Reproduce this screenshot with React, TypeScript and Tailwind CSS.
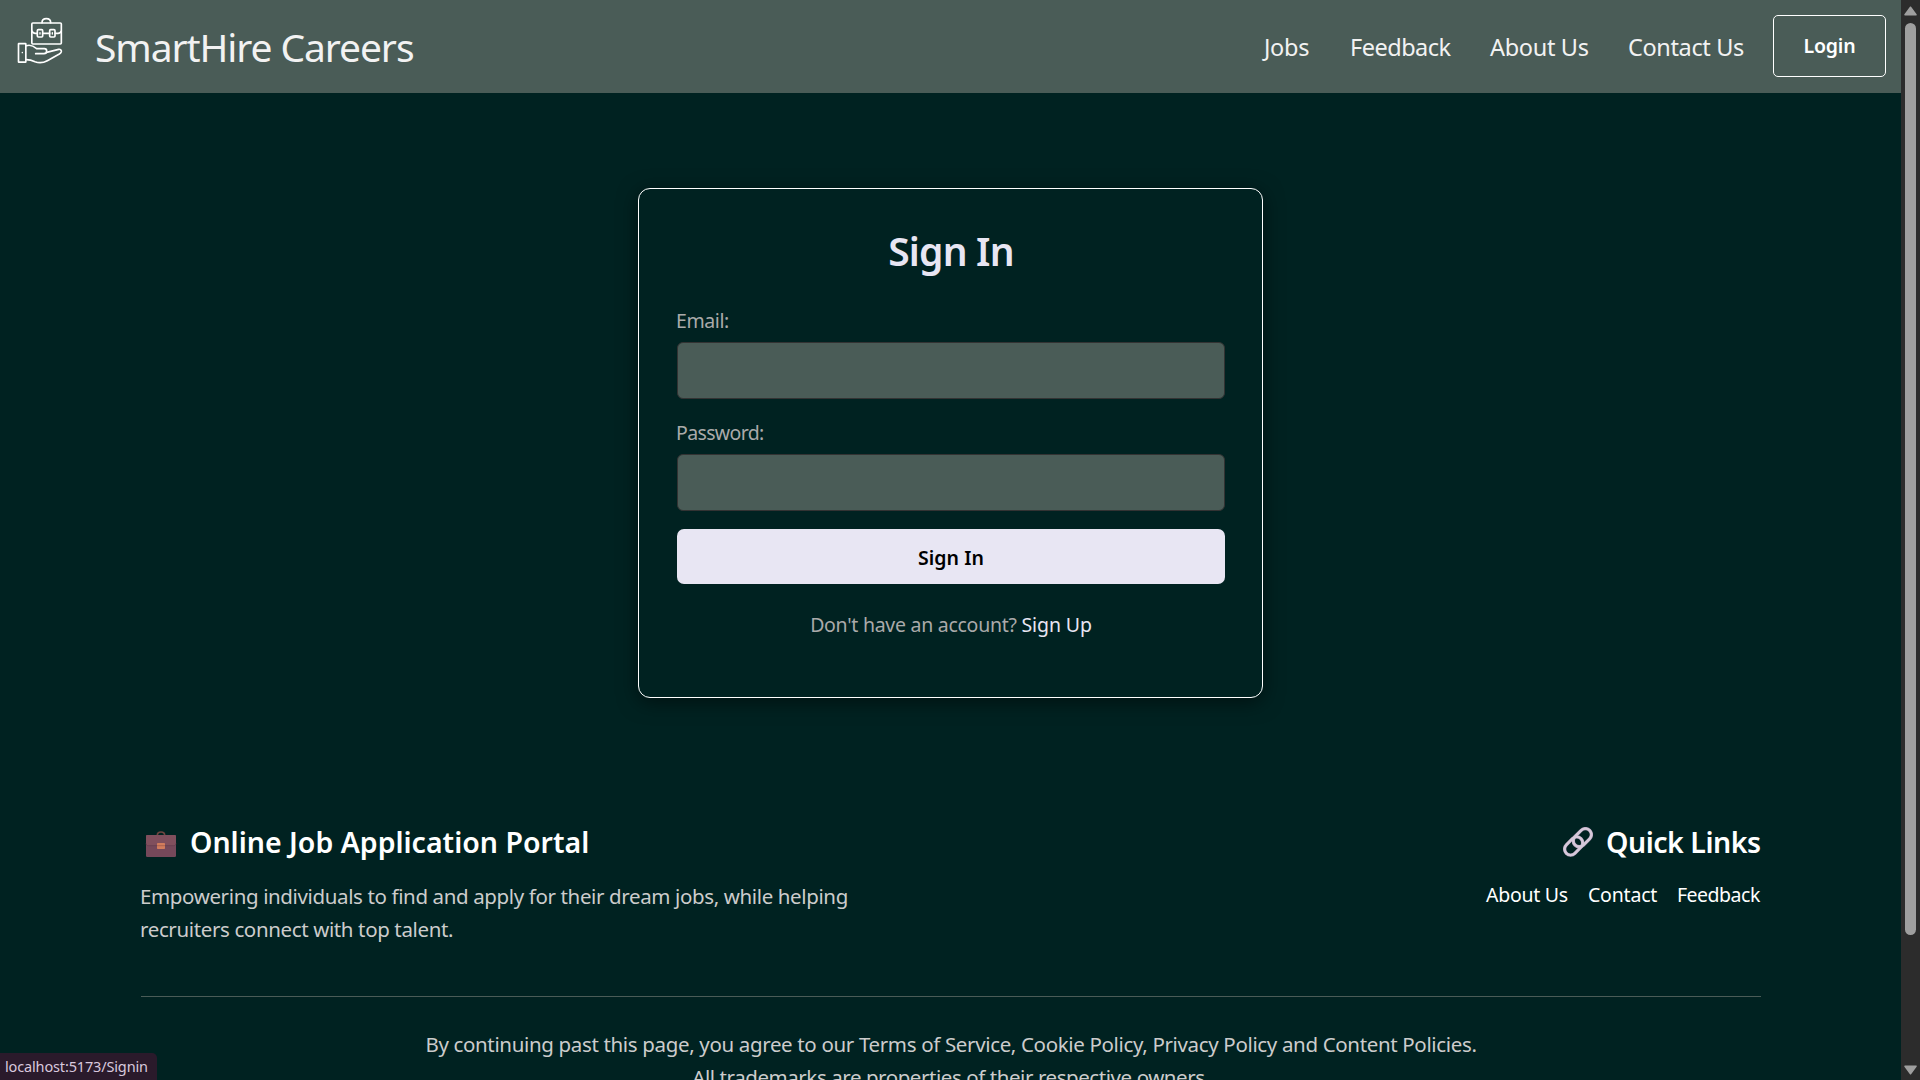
import React from "react";

function LogoIcon() {
  return (
    <svg
      viewBox="0 0 240 240"
      className="h-[80px] w-[80px] shrink-0 self-start"
      fill="none"
      stroke="#ffffff"
      strokeWidth="5"
      strokeLinecap="round"
      strokeLinejoin="round"
    >
      <path d="M126 68c0-7 5-12 13-12s13 5 13 12" />
      <rect x="95.500" y="69" width="88.500" height="63" rx="3" />
      <path d="M96 93c2 5 5 7 10 7h5M128 100h21M166 100h8c5 0 8-2 10-7" />
      <rect x="112" y="89" width="16" height="22" rx="3" />
      <rect x="149" y="89" width="16" height="22" rx="3" />
      <path d="M120 98v4M157 98v4" strokeWidth="4" />
      <rect x="55.500" y="131" width="22" height="55.500" rx="1" />
      <path d="M67 157v1" strokeWidth="4" />
      <path d="M79 137c12-4 22 1 31 9h23c4 0 7 3 7 7s-3 8-8 8h-25" />
      <path d="M140 157l36-9c5-1 9 3 8 7-1 3-3 5-6 7l-36 20c-13 7-24 8-37 3-9-4-17-6-26-6" />
    </svg>
  );
}

function BriefcaseIcon() {
  return (
    <svg viewBox="3 30 120 84" className="mt-1 h-[28px] w-[40px] shrink-0">
      <path d="M52 46c0-6 4-10 11-10s11 4 11 10" fill="none" stroke="#6f4540" strokeWidth="5" />
      <rect x="18" y="45" width="90" height="66" rx="4" fill="#75485a" />
      <path d="M18 49c0-2 2-4 4-4h82c2 0 4 2 4 4v21c0 4-3 7-7 7H25c-4 0-7-3-7-7z" fill="#804f5d" />
      <path d="M18 70c0 4 3 7 7 7h76c4 0 7-3 7-7" fill="none" stroke="#5f3a4c" strokeWidth="2" />
      <rect x="51" y="69" width="24" height="18" rx="2" fill="#d17c5c" />
      <path d="M51 77h24" stroke="#9c5548" strokeWidth="2" />
    </svg>
  );
}

function ChainIcon() {
  return (
    <svg viewBox="0 0 90 90" className="h-[30px] w-[30px] shrink-0" fill="none">
      <g stroke="#b3a1bb" strokeWidth="10">
        <rect x="-31" y="-18" width="62" height="36" rx="18" transform="translate(32 57) rotate(-45)" />
        <rect x="-31" y="-18" width="62" height="36" rx="18" transform="translate(58 32) rotate(-45)" />
      </g>
      <g stroke="#d6c9da" strokeWidth="7">
        <rect x="-31" y="-18" width="62" height="36" rx="18" transform="translate(32 57) rotate(-45)" />
        <rect x="-31" y="-18" width="62" height="36" rx="18" transform="translate(58 32) rotate(-45)" />
      </g>
    </svg>
  );
}

function Header() {
  return (
    <header className="flex h-[93px] shrink-0 items-center bg-[#4a5c57] pr-[15px] text-[#f2f2f2]">
      <LogoIcon />
      <div className="ml-[15px] text-[39px] leading-[52px] tracking-[-1.09px]">SmartHire Careers</div>
      <nav className="ml-auto flex items-center text-[23.5px] leading-[32px]">
        <a className="w-[86px] tracking-[-0.3px]">Jobs</a>
        <a className="w-[140px] tracking-[-0.5px]">Feedback</a>
        <a className="w-[138px] tracking-[-0.33px]">About Us</a>
        <a className="w-[145px] tracking-[-0.37px]">Contact Us</a>
        <button className="mb-px h-[62px] w-[113px] rounded-[5px] border border-white text-[19.5px] font-semibold leading-[30px] tracking-[-0.2px] text-white">
          Login
        </button>
      </nav>
    </header>
  );
}

function SignInCard() {
  return (
    <form className="ml-[638px] mt-[95px] h-[510px] w-[625px] shrink-0 rounded-[12px] border border-white py-[38px] pl-[38px] pr-[37px] text-[19.5px] leading-[30px] text-[#aaaaaa] shadow-[0_4px_20px_rgba(0,0,0,0.5)]">
      <h2 className="text-center text-[39px] font-semibold leading-[48px] tracking-[-0.8px] text-[#e8e6f3]">Sign In</h2>
      <label className="-ml-px mt-[31px] block tracking-[-0.41px]">Email:</label>
      <input className="mt-[6px] block h-[57px] w-full rounded-[6px] border border-[#333333] bg-[#4a5c57]" type="email" />
      <label className="-ml-px mt-[19px] block tracking-[-0.65px]">Password:</label>
      <input className="mt-[6px] block h-[57px] w-full rounded-[6px] border border-[#333333] bg-[#4a5c57]" type="password" />
      <button
        type="button"
        className="mt-[18px] block h-[55px] w-full rounded-[7px] bg-[#e8e6f3] pt-[2px] font-semibold tracking-[0.05px] text-black"
      >
        Sign In
      </button>
      <p className="mt-[26px] text-center tracking-[-0.27px]">
        Don't have an account? <a className="tracking-[-0.1px] text-[#e8e6f3]">Sign Up</a>
      </p>
    </form>
  );
}

function Footer() {
  return (
    <footer className="ml-[141px] mt-[125px] w-[1620px] shrink-0 text-[20.5px] leading-[33px] text-[#cccccc]">
      <div className="flex h-[174px] justify-between border-b border-[#4a5c57]">
        <div>
          <h3 className="flex h-[38px] items-center gap-[9px] text-[28.5px] font-semibold leading-[38px] text-white">
            <BriefcaseIcon />
            <span>Online Job Application Portal</span>
          </h3>
          <p className="-ml-px mt-[19px] whitespace-nowrap tracking-[-0.37px]">
            Empowering individuals to find and apply for their dream jobs, while helping
            <br />
            recruiters connect with top talent.
          </p>
        </div>
        <div>
          <h3 className="flex h-[38px] items-center justify-end gap-[13px] text-[28.5px] font-semibold leading-[38px] text-white">
            <ChainIcon />
            <span className="w-[155px] whitespace-nowrap tracking-[-0.47px]">Quick Links</span>
          </h3>
          <div className="mt-[19px] flex text-[19.5px] leading-[30px] text-white">
            <a className="w-[102px] tracking-[-0.27px]">About Us</a>
            <a className="w-[89px] tracking-[-0.2px]">Contact</a>
            <a className="w-[84px] tracking-[-0.5px]">Feedback</a>
          </div>
        </div>
      </div>
      <div className="mt-[31px] text-center">
        <p className="tracking-[-0.345px]">
          By continuing past this page, you agree to our Terms of Service, Cookie Policy, Privacy Policy and Content Policies.
        </p>
        <p className="tracking-[-0.43px]">All trademarks are properties of their respective owners.</p>
      </div>
    </footer>
  );
}

function Scrollbar() {
  return (
    <div className="flex h-full w-[19px] shrink-0 flex-col items-center bg-[#2c2c2c] pb-[5px] pt-[6px]">
      <svg viewBox="0 0 13 10" className="h-[10px] w-[13px] shrink-0">
        <path d="M6.500 1.200L12 8.800H1z" fill="#9f9f9f" stroke="#9f9f9f" strokeWidth="1.500" strokeLinejoin="round" />
      </svg>
      <div className="mt-[7px] h-[912px] w-[11px] shrink-0 rounded-full bg-[#9f9f9f]" />
      <svg viewBox="0 0 13 10" className="mt-auto h-[10px] w-[13px] shrink-0">
        <path d="M6.500 8.800L12 1.200H1z" fill="#9f9f9f" stroke="#9f9f9f" strokeWidth="1.500" strokeLinejoin="round" />
      </svg>
    </div>
  );
}

export default function App() {
  return (
    <div className="relative flex h-[1080px] w-[1920px] overflow-hidden bg-[#002221] font-['Noto_Sans','Open_Sans',sans-serif]">
      <main className="flex h-full w-[1901px] shrink-0 flex-col overflow-hidden">
        <Header />
        <SignInCard />
        <Footer />
      </main>
      <Scrollbar />
      <div className="absolute bottom-0 left-0 h-[27px] w-[157px] whitespace-nowrap rounded-tr-[5px] bg-[#2a1a2b] pl-[5px] text-[14.5px] leading-[27px] tracking-[-0.15px] text-[#d9c9de]">
        localhost:5173/Signin
      </div>
    </div>
  );
}
